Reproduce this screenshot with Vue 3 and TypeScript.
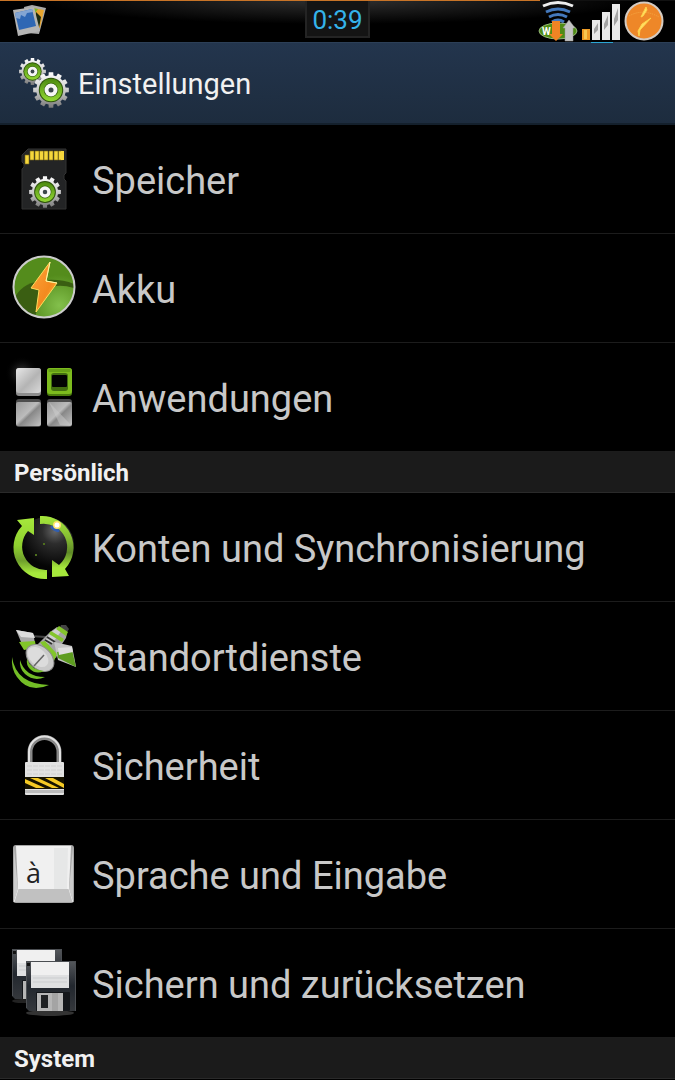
<script setup lang="ts">
interface Entry {
  id: string
  label: string
}

interface Section {
  title: string
  entries: Entry[]
}

const sections: Section[] = [
  {
    title: '',
    entries: [
      { id: 'storage', label: 'Speicher' },
      { id: 'battery', label: 'Akku' },
      { id: 'apps', label: 'Anwendungen' },
    ],
  },
  {
    title: 'Persönlich',
    entries: [
      { id: 'sync', label: 'Konten und Synchronisierung' },
      { id: 'location', label: 'Standortdienste' },
      { id: 'security', label: 'Sicherheit' },
      { id: 'language', label: 'Sprache und Eingabe' },
      { id: 'backup', label: 'Sichern und zurücksetzen' },
    ],
  },
  { title: 'System', entries: [] },
]

// Outline of a cog wheel centred on 0,0 with an outer radius of 50.
function cog(teeth: number): string {
  const step = (Math.PI * 2) / teeth
  const at = (r: number, a: number) => `${(r * Math.cos(a)).toFixed(1)} ${(r * Math.sin(a)).toFixed(1)}`
  let d = ''
  for (let i = 0; i < teeth; i++) {
    const a = i * step - Math.PI / 2
    d += `${i ? 'L' : 'M'}${at(41, a - step * 0.32)}L${at(50, a - step * 0.24)}L${at(50, a + step * 0.24)}L${at(41, a + step * 0.32)}`
  }
  return d + 'Z'
}

const cogPath = cog(12)
</script>

<template>
  <div class="screen">
    <svg class="defs" aria-hidden="true">
      <defs>
        <linearGradient id="steel" x1="0" y1="0" x2="0" y2="1">
          <stop offset="0" stop-color="#fff" />
          <stop offset="0.5" stop-color="#ccc" />
          <stop offset="1" stop-color="#777" />
        </linearGradient>
        <linearGradient id="plate" x1="0" y1="0" x2="1" y2="1">
          <stop offset="0" stop-color="#e8e8e8" />
          <stop offset="0.55" stop-color="#b4b4b4" />
          <stop offset="1" stop-color="#dadada" />
        </linearGradient>
        <linearGradient id="plateDark" x1="0" y1="0" x2="1" y2="1">
          <stop offset="0" stop-color="#999" />
          <stop offset="0.45" stop-color="#bcbcbc" />
          <stop offset="0.55" stop-color="#888" />
          <stop offset="1" stop-color="#c4c4c4" />
        </linearGradient>
        <linearGradient id="leaf" x1="0" y1="0" x2="0" y2="1">
          <stop offset="0" stop-color="#4c8a10" />
          <stop offset="1" stop-color="#93d933" />
        </linearGradient>
        <linearGradient id="ringLeft" x1="0" y1="0" x2="0" y2="1">
          <stop offset="0" stop-color="#a6e83c" />
          <stop offset="0.45" stop-color="#8fd02f" />
          <stop offset="0.7" stop-color="#6f9f2c" />
          <stop offset="0.9" stop-color="#a6e83c" />
        </linearGradient>
        <linearGradient id="ringRight" x1="0" y1="0" x2="0" y2="1">
          <stop offset="0" stop-color="#a6e83c" />
          <stop offset="0.35" stop-color="#86bd32" />
          <stop offset="0.6" stop-color="#5f8a27" />
          <stop offset="0.85" stop-color="#a6e83c" />
        </linearGradient>
        <radialGradient id="orb" cx="0.66" cy="0.25" r="0.65">
          <stop offset="0" stop-color="#666" />
          <stop offset="0.35" stop-color="#2d2d2d" />
          <stop offset="1" stop-color="#050505" />
        </radialGradient>
        <radialGradient id="glow">
          <stop offset="0" stop-color="#888" />
          <stop offset="1" stop-color="#000" stop-opacity="0" />
        </radialGradient>
        <radialGradient id="meadow" cx="0.75" cy="0.8" r="0.5">
          <stop offset="0" stop-color="#83c04c" />
          <stop offset="1" stop-color="#548c1c" />
        </radialGradient>
        <linearGradient id="bolt" x1="0" y1="0" x2="1" y2="1">
          <stop offset="0" stop-color="#ffa53b" />
          <stop offset="0.6" stop-color="#f38a20" />
          <stop offset="1" stop-color="#ffc83d" />
        </linearGradient>
        <linearGradient id="floppy" x1="0" y1="0" x2="0" y2="1">
          <stop offset="0" stop-color="#55585c" />
          <stop offset="0.5" stop-color="#22272e" />
          <stop offset="1" stop-color="#35383c" />
        </linearGradient>
        <symbol id="cog" viewBox="-50 -50 100 100">
          <path :d="cogPath" fill="url(#steel)" />
          <circle r="34" fill="#2d5209" />
          <circle r="31" fill="url(#leaf)" />
          <circle r="20" fill="#356309" />
          <circle r="18" fill="#f6f6f6" />
          <circle r="7" fill="#3c474b" />
        </symbol>
        <symbol id="disk" viewBox="0 0 50 50">
          <path d="M0 0H50V50H3L0 47Z" fill="url(#floppy)" />
          <path d="M0.5 47V0.5H49.5V50" fill="none" stroke="#4b4e52" />
          <rect x="5" y="1" width="38" height="26" fill="#f0f0f0" />
          <path d="M5 14H43V27H5Z" fill="#dfe0e1" />
          <path d="M7 17H41M7 21H41" stroke="#cbcdcf" />
          <rect x="1" y="2" width="3" height="3" fill="#111" />
          <rect x="10" y="31" width="34" height="19" rx="1" fill="#14171b" />
          <rect x="11" y="32" width="26" height="18" fill="#b6b6b6" />
          <path d="M26 32h6v18h-6z" fill="#a4a4a4" />
          <rect x="15" y="34" width="7" height="13" fill="#202224" />
        </symbol>
      </defs>
    </svg>

    <header class="status">
      <svg class="photos" viewBox="0 0 36 34" aria-hidden="true">
        <path d="M12 3L20 1L34 4L27 30L15 29Z" fill="#aaa" />
        <path d="M20 4L32 6L28 24L22 22Z" fill="#e8a52e" />
        <path d="M24 8L29 13L27 24L22 20Z" fill="#1d2a10" />
        <path d="M20 4L26 5L23 9Z" fill="#79b52b" />
        <path d="M1 6L22 3L28 27L6 32Z" fill="#b5b5b5" />
        <path d="M3 9L20 5L24 22L7 26Z" fill="#2f67b4" />
        <path d="M3 9L20 5L21 8L15 9L13 13L9 11L8 15L4 14Z" fill="#83a5d3" />
      </svg>
      <time class="clock">0:39</time>
      <div class="tray">
        <svg class="wifi" viewBox="0 0 40 42" aria-label="WLAN">
          <g fill="none" stroke-width="3">
            <path d="M5 6Q20 -1 35 6" stroke="#eee" />
            <path d="M8 12Q20 6 32 12" stroke="#4479bd" />
            <path d="M11 17Q20 12 29 17" stroke="#4479bd" />
            <path d="M14 22Q20 18 26 22" stroke="#4479bd" />
          </g>
          <ellipse cx="20" cy="31" rx="19" ry="8" fill="#4f8c14" stroke="#98b97b" />
          <text x="4" y="35">W</text>
          <path d="M14 21h8v13h3l-7 7l-7 -7h3z" fill="#ef8424" />
          <path d="M31 20l6 8h-2v13h-8V28h-2z" fill="#c4c4c4" stroke="#999" stroke-width="0.5" />
        </svg>
        <svg class="bars" viewBox="0 0 38 43" aria-label="Empfang">
          <rect y="29" width="8" height="11" fill="#ee9c25" />
          <rect x="2" y="30" width="3" height="9" fill="#f8c850" />
          <path d="M10 20h8v20h-8zM20 12h8v28h-8zM30 4h8v36h-8z" fill="#e9e9e9" />
          <path d="M12 29l4-6v7l-4 4zM22 24l4-9v10l-4 5zM32 19l4-11v12l-4 6z" fill="#a2a2a2" />
          <rect x="9" y="42" width="22" height="1" fill="#2ba6d5" />
        </svg>
        <svg class="charge" viewBox="0 0 40 42" aria-label="Akku">
          <circle cx="20" cy="21" r="18.5" fill="#ee8728" stroke="#d4cbc2" stroke-width="2" />
          <path d="M5 16Q19 8 35 17" fill="none" stroke="#f6a944" stroke-dasharray="1 1" />
          <path d="M22 7L17 17L19 16L23 10ZM27 18L18 24L14 31L15 36L16 30Z" fill="#ffe066" stroke="#ffd24a" />
        </svg>
      </div>
    </header>

    <div class="title-bar">
      <svg class="title-icon" viewBox="0 0 50 50" aria-hidden="true">
        <use href="#cog" x="0" y="0" width="27" height="27" />
        <use href="#cog" x="14" y="14" width="36" height="36" />
      </svg>
      <h1>Einstellungen</h1>
    </div>

    <main>
      <section v-for="(section, i) in sections" :key="i">
        <h2 v-if="section.title">{{ section.title }}</h2>
        <ul v-if="section.entries.length">
          <li v-for="entry in section.entries" :key="entry.id">
            <button type="button">
              <svg class="icon" viewBox="0 0 64 64" aria-hidden="true">
                <g v-if="entry.id === 'storage'">
                  <path d="M16 2H54V26L52 28V32L54 34V62H10V22L12 20V17L10 15V8Z" fill="#232425" stroke="#333" />
                  <path d="M13 8h4v9h-4zM18 4h4v9h-4zM23 4h4v9h-4zM27.500 4h4v9h-4zM32 4h4v9h-4zM37 4h4v9h-4zM42 4h4v9h-4zM46.500 4h4v9h-4z" fill="#f6d73c" stroke="#7d6a16" stroke-width="0.6" />
                  <rect x="49" y="4" width="3" height="9" fill="#f6d73c" />
                  <use href="#cog" x="17" y="29" width="32" height="32" />
                </g>
                <g v-else-if="entry.id === 'battery'">
                  <circle cx="32" cy="31" r="30.500" fill="url(#meadow)" />
                  <path d="M3 41Q12 25 33 25L23 61A30 30 0 0 1 3 41Z" fill="#3a5e12" />
                  <path d="M34 24Q50 23 62 28V32Q52 29 44 30Z" fill="#3a5e12" />
                  <circle cx="32" cy="31" r="30.500" fill="none" stroke="#ccc" stroke-width="2" />
                  <path d="M38 6L19 32L27 34L24 56L45 27L34 25Z" fill="url(#bolt)" stroke="#ffdc5a" />
                  <path d="M38 6L34 25L45 27" fill="none" stroke="#fff3a8" />
                </g>
                <g v-else-if="entry.id === 'apps'">
                  <circle cx="10" cy="8" r="17" fill="url(#glow)" opacity="0.5" />
                  <rect x="4" y="3" width="25" height="28" rx="3" fill="#8d8d8d" />
                  <rect x="4" y="3" width="25" height="25" rx="3" fill="url(#plate)" />
                  <rect x="35" y="3" width="25" height="28" rx="3" fill="#4c7d0c" />
                  <rect x="35" y="3" width="25" height="26" rx="3" fill="#7dbb1e" />
                  <rect x="36.500" y="4" width="22" height="3" rx="1" fill="#66a016" />
                  <rect x="39" y="8" width="17" height="18" rx="3" fill="#436e10" />
                  <rect x="40" y="10" width="15" height="12" rx="1" fill="#030303" />
                  <rect x="4" y="34" width="25" height="28" rx="3" fill="#4d4d4d" />
                  <rect x="4" y="37" width="25" height="24" rx="2" fill="url(#plateDark)" />
                  <rect x="35" y="34" width="25" height="28" rx="3" fill="#4d4d4d" />
                  <rect x="35" y="37" width="25" height="24" rx="2" fill="url(#plateDark)" />
                  <path d="M37 37L59 60H48Z" fill="#ccc" opacity="0.5" />
                </g>
                <g v-else-if="entry.id === 'sync'">
                  <circle cx="34" cy="30" r="28" fill="url(#orb)" />
                  <path d="M35 64A31.500 31.500 0 0 1 10 11L5 5L22 3L22 20L16 16A23.500 23.500 0 0 0 35 55Z" fill="url(#ringLeft)" />
                  <path d="M28 1A31.500 31.500 0 0 1 53 54L57 61L40 62V45L47 50A23.500 23.500 0 0 0 28 9Z" fill="url(#ringRight)" />
                  <ellipse cx="43" cy="14" rx="5" ry="2" fill="#315eb0" transform="rotate(30 43 14)" />
                  <circle cx="45" cy="10" r="4" fill="#ffe26b" />
                  <circle cx="45" cy="10" r="2.500" fill="#fff" />
                  <path d="M23 39h2v2h-2zM31 28h2v2h-2z" fill="#4e6f1d" />
                </g>
                <g v-else-if="entry.id === 'location'">
                  <path d="M18 12L50 14" stroke="#444" stroke-width="2" />
                  <path d="M4 6L21 9L24 24L12 25Z" fill="#aaa" />
                  <path d="M4 6L21 9L23 14L9 13Z" fill="#ddd" />
                  <path d="M7 18L23 17L24 24L12 26Z" fill="#82c62a" />
                  <path d="M49 1L54 1L57 5L54 10L47 6Z" fill="#444" />
                  <path d="M45 3L55 9L54 14L50 20L44 34L24 22L32 14L38 8Z" fill="#a4a4a4" />
                  <path d="M45 4L50 6L40 20L32 19L38 9Z" fill="#cfcfcf" />
                  <path d="M47 2L56 8L54 12L44 5ZM39 7L52 15L50 18L37 10Z" fill="#84c52c" />
                  <path d="M35 13L43 18M33 16L40 20" stroke="#333" stroke-width="2" />
                  <path d="M28 18L33 17L45 30L42 37Z" fill="#82c62a" />
                  <path d="M42 18L60 22L64 43L46 36Z" fill="#c4c4c4" />
                  <path d="M45 28L60 26L64 43L46 34Z" fill="#5e9d20" />
                  <path d="M46 24L60 23L61 28L47 31Z" fill="#dedede" />
                  <ellipse cx="28" cy="34" rx="16" ry="11" transform="rotate(43 28 34)" fill="#c9c9c9" stroke="#8c8c8c" />
                  <ellipse cx="26" cy="33" rx="12" ry="8" transform="rotate(43 26 33)" fill="#dcdcdc" />
                  <path d="M22 42L32 31" stroke="#666" stroke-width="1.500" />
                  <path d="M0 33Q4 60 37 61Q17 70 5 53Q-1 45 0 33Z" fill="#73bd26" />
                  <path d="M8 36Q13 53 33 53Q22 58 13 50Q7 44 8 36Z" fill="#73bd26" />
                  <path d="M15 35Q19 46 32 47Q24 51 18 45Q14 41 15 35Z" fill="#73bd26" />
                </g>
                <g v-else-if="entry.id === 'security'">
                  <path d="M18 33V19A14.500 14.500 0 0 1 47 19V33" fill="none" stroke="#888" stroke-width="5" />
                  <path d="M17 33V19A15.500 15.500 0 0 1 48 19V33" fill="none" stroke="#e1e1e1" stroke-width="2" />
                  <rect x="13" y="29" width="39" height="33" rx="1" fill="#e2e2e2" />
                  <path d="M15 33H50M15 37H50M15 41H50" stroke="#d0d0d0" stroke-dasharray="5 1" />
                  <rect x="13" y="44" width="39" height="12" fill="#171300" />
                  <path d="M13 46L33 55H24L13 50ZM18 45H26L47 55H40ZM33 45H41L52 51V55Z" fill="#f6ca24" />
                  <path d="M13 57H52V60H13Z" fill="#bbb" />
                </g>
                <g v-else-if="entry.id === 'language'">
                  <rect x="1" y="3" width="61" height="58" rx="3" fill="#a7a7a7" />
                  <path d="M4 4H59L57 47H6Z" fill="#f0f0f0" />
                  <path d="M42 6H56L55 47H42Z" fill="#e6e7e7" />
                  <path d="M6 47H57L61 60H2Z" fill="#c1c1c1" />
                  <path d="M2 60L6 47M61 60L57 47" stroke="#eee" />
                  <path d="M2 6L6 47L2 59ZM61 6L57 47L61 59Z" fill="#ccc" />
                  <text x="14" y="41">à</text>
                </g>
                <g v-else>
                  <ellipse cx="38" cy="62" rx="24" ry="3" fill="#333" />
                  <ellipse cx="10" cy="50" rx="10" ry="2" fill="#222" />
                  <use href="#disk" x="0" y="-2" width="50" height="50" />
                  <use href="#disk" x="14" y="10" width="50" height="50" />
                </g>
              </svg>
              <span>{{ entry.label }}</span>
            </button>
          </li>
        </ul>
      </section>
    </main>
  </div>
</template>

<style>
html,
body {
  background: #000;
}
</style>

<style scoped>
.screen {
  min-height: 100vh;
  background: #000;
  font-family: Roboto, "Liberation Sans", sans-serif;
}

.defs {
  position: absolute;
  width: 0;
  height: 0;
}

.status {
  display: grid;
  grid-template-columns: 1fr auto 1fr;
  height: 42px;
  background:
    linear-gradient(90deg, #c87427 80%, #111 80%) top / 100% 1px no-repeat,
    radial-gradient(ellipse 300px 24px at 50% 0, #303030, #000);
}

.photos {
  width: 36px;
  height: 34px;
  margin: 4px 0 0 12px;
}

.clock {
  height: 37px;
  box-sizing: border-box;
  margin-top: 1px;
  padding: 0 5px;
  border: 2px solid #242424;
  border-top: 0;
  background: #141414;
  color: #35b3ea;
  font-size: 26px;
  line-height: 38px;
}

.tray {
  display: flex;
  justify-content: flex-end;
  gap: 4px;
  padding-right: 11px;
}

.wifi,
.charge {
  width: 40px;
  height: 42px;
}

.wifi text {
  fill: #fff;
  font-size: 10px;
  font-weight: 700;
}

.bars {
  width: 38px;
  height: 43px;
}

.title-bar {
  display: flex;
  align-items: center;
  gap: 9px;
  height: 83px;
  box-sizing: border-box;
  padding-left: 19px;
  border-top: 1px solid #2c3f57;
  border-bottom: 2px solid #14202c;
  background: linear-gradient(#23354d, #1d2c3e);
}

.title-icon {
  width: 50px;
  height: 50px;
}

h1 {
  margin: 0;
  padding-top: 2px;
  color: #f1f1f1;
  font-size: 29px;
  font-weight: 400;
  line-height: 40px;
}

h2 {
  margin: 0;
  padding: 2px 14px 0;
  border-bottom: 1px solid #2a2a2a;
  background: #1b1b1b;
  color: #f1f1f1;
  font-size: 24px;
  font-weight: 700;
  line-height: 38px;
}

ul {
  margin: 0;
  padding: 0;
  list-style: none;
}

li {
  border-bottom: 1px solid #1c1c1c;
}

button {
  display: flex;
  align-items: center;
  gap: 16px;
  width: 100%;
  height: 108px;
  padding: 0 12px;
  border: 0;
  background: none;
  color: #c8c8c8;
  font-family: inherit;
  font-size: 38px;
  line-height: 48px;
  text-align: left;
}

button span {
  padding-top: 4px;
}

.icon {
  flex: none;
  width: 64px;
  height: 64px;
  overflow: visible;
}

.icon text {
  fill: #222;
  font-family: "Open Sans", "Noto Sans", sans-serif;
  font-size: 27px;
}
</style>
